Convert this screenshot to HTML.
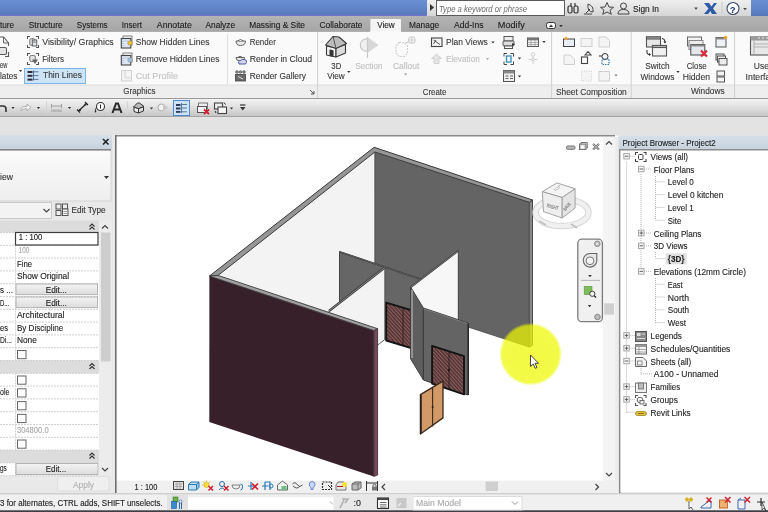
<!DOCTYPE html>
<html><head><meta charset="utf-8"><title>Revit</title>
<style>html,body{margin:0;padding:0;width:768px;height:512px;overflow:hidden;background:#e9e9e9}
svg{display:block;filter:blur(0.25px)} text{font-family:"Liberation Sans", sans-serif;}</style></head>
<body><svg width="768" height="512" viewBox="0 0 768 512">
<rect x="0" y="0" width="768" height="512" fill="#e9e9e9" />
<defs><linearGradient id="gTitle" x1="0" y1="0" x2="0" y2="1"><stop offset="0" stop-color="#6b90d4"/><stop offset="0.6" stop-color="#5f82c6"/><stop offset="1" stop-color="#5777b8"/></linearGradient><linearGradient id="gTitleR" x1="0" y1="0" x2="0" y2="1"><stop offset="0" stop-color="#efefef"/><stop offset="1" stop-color="#d6d6d6"/></linearGradient><linearGradient id="gQat" x1="0" y1="0" x2="0" y2="1"><stop offset="0" stop-color="#f2f2f2"/><stop offset="0.4" stop-color="#e4e4e4"/><stop offset="1" stop-color="#c6c6c6"/></linearGradient><linearGradient id="gTab" x1="0" y1="0" x2="0" y2="1"><stop offset="0" stop-color="#b4b4b4"/><stop offset="1" stop-color="#a6a6a6"/></linearGradient><linearGradient id="gPH" x1="0" y1="0" x2="0" y2="1"><stop offset="0" stop-color="#d6e0ea"/><stop offset="1" stop-color="#c6d3df"/></linearGradient><linearGradient id="gBtn" x1="0" y1="0" x2="0" y2="1"><stop offset="0" stop-color="#f4f4f4"/><stop offset="1" stop-color="#dcdcdc"/></linearGradient><radialGradient id="gYel"><stop offset="0" stop-color="#eef800" stop-opacity="0.74"/><stop offset="0.9" stop-color="#eef800" stop-opacity="0.72"/><stop offset="1" stop-color="#eef800" stop-opacity="0"/></radialGradient><pattern id="hatch" patternUnits="userSpaceOnUse" width="2.6" height="4" patternTransform="rotate(-42)"><rect width="2.6" height="4" fill="#4c2f2f"/><rect width="1.2" height="4" fill="#8e6060"/></pattern><linearGradient id="gSel" x1="0" y1="0" x2="0" y2="1"><stop offset="0" stop-color="#fbfbfb"/><stop offset="1" stop-color="#eeeeee"/></linearGradient></defs>
<rect x="0" y="0" width="768" height="16" fill="url(#gTitle)" />
<line x1="0" y1="15.5" x2="427" y2="15.5" stroke="#7570d4" stroke-width="1" />
<rect x="427" y="0" width="324" height="16" fill="url(#gTitleR)" />
<rect x="751" y="0" width="17" height="16" fill="url(#gTitle)" />
<polygon points="430.0,4.0 434.0,7.5 430.0,11.0" fill="#333" />
<rect x="436.5" y="0.5" width="128" height="15" fill="#ffffff" stroke="#5a5a5a" stroke-width="1" />
<text x="439" y="11.5" font-size="9" font-style="italic" fill="#6a6a6a" textLength="88" lengthAdjust="spacingAndGlyphs">Type a keyword or phrase</text>
<g fill="none" stroke="#333" stroke-width="1.2"><rect x="568" y="6" width="4" height="7" rx="1.5"/><rect x="574" y="6" width="4" height="7" rx="1.5"/><line x1="571" y1="3" x2="571" y2="6"/><line x1="575" y1="3" x2="575" y2="6"/></g>
<g fill="none" stroke="#444" stroke-width="1"><path d="M586 13 L590 9 M588 4 Q 594 6 593 12 Q 587 12 588 4 Z M584 14 L592 14"/></g>
<path d="M607 2.5 L609 7 L613.5 7.3 L610 10.2 L611.3 14.3 L607 12 L602.7 14.3 L604 10.2 L600.5 7.3 L605 7 Z" fill="none" stroke="#444" stroke-width="1"/>
<g fill="none" stroke="#444" stroke-width="1"><circle cx="623.5" cy="6" r="3"/><path d="M618 14 Q618 9.5 623.5 9.5 Q629 9.5 629 14 Z"/></g>
<text x="633.0" y="12.0" font-size="9" fill="#222" stroke="#222" stroke-width="0.12" textLength="26.0" lengthAdjust="spacingAndGlyphs">Sign In</text>
<polygon points="694.2,7.4 697.8,7.4 696.0,9.8" fill="#444" />
<path d="M704 3 L709 3 L711.5 6.5 L714 3 L717 3 L713 8.5 L717 14 L712 14 L710.5 11 L708 14 L704 14 L708.5 8.5 Z" fill="#2e5aa8"/>
<line x1="722" y1="2" x2="722" y2="14" stroke="#c8c8c8" stroke-width="1" />
<circle cx="733" cy="8.5" r="6" fill="#fff" stroke="#3a4a6a" stroke-width="1.1"/>
<text x="730.0" y="12.5" font-size="9" fill="#1e3c7a" stroke="#1e3c7a" stroke-width="0.12" font-weight="bold">?</text>
<polygon points="743.2,7.9 746.8,7.9 745.0,10.3" fill="#444" />
<rect x="0" y="16" width="768" height="15" fill="url(#gTab)" />
<rect x="370.5" y="19" width="30.5" height="12" fill="#f4f4f4" />
<line x1="370.5" y1="19" x2="370.5" y2="31" stroke="#d8d8d8" stroke-width="1" />
<text x="0.0" y="28.0" font-size="9" fill="#1e1e1e" stroke="#1e1e1e" stroke-width="0.12" textLength="14.0" lengthAdjust="spacingAndGlyphs">ture</text>
<text x="28.8" y="28.0" font-size="9" fill="#1e1e1e" stroke="#1e1e1e" stroke-width="0.12" textLength="33.8" lengthAdjust="spacingAndGlyphs">Structure</text>
<text x="76.8" y="28.0" font-size="9" fill="#1e1e1e" stroke="#1e1e1e" stroke-width="0.12" textLength="30.8" lengthAdjust="spacingAndGlyphs">Systems</text>
<text x="121.8" y="28.0" font-size="9" fill="#1e1e1e" stroke="#1e1e1e" stroke-width="0.12" textLength="20.2" lengthAdjust="spacingAndGlyphs">Insert</text>
<text x="156.8" y="28.0" font-size="9" fill="#1e1e1e" stroke="#1e1e1e" stroke-width="0.12" textLength="35.0" lengthAdjust="spacingAndGlyphs">Annotate</text>
<text x="205.5" y="28.0" font-size="9" fill="#1e1e1e" stroke="#1e1e1e" stroke-width="0.12" textLength="29.5" lengthAdjust="spacingAndGlyphs">Analyze</text>
<text x="249.2" y="28.0" font-size="9" fill="#1e1e1e" stroke="#1e1e1e" stroke-width="0.12" textLength="55.8" lengthAdjust="spacingAndGlyphs">Massing &amp; Site</text>
<text x="319.5" y="28.0" font-size="9" fill="#1e1e1e" stroke="#1e1e1e" stroke-width="0.12" textLength="43.0" lengthAdjust="spacingAndGlyphs">Collaborate</text>
<text x="377.2" y="28.0" font-size="9" fill="#1e1e1e" stroke="#1e1e1e" stroke-width="0.12" textLength="17.5" lengthAdjust="spacingAndGlyphs">View</text>
<text x="409.0" y="28.0" font-size="9" fill="#1e1e1e" stroke="#1e1e1e" stroke-width="0.12" textLength="30.2" lengthAdjust="spacingAndGlyphs">Manage</text>
<text x="454.0" y="28.0" font-size="9" fill="#1e1e1e" stroke="#1e1e1e" stroke-width="0.12" textLength="29.5" lengthAdjust="spacingAndGlyphs">Add-Ins</text>
<text x="497.8" y="28.0" font-size="9" fill="#1e1e1e" stroke="#1e1e1e" stroke-width="0.12" textLength="27.0" lengthAdjust="spacingAndGlyphs">Modify</text>
<rect x="546.5" y="22.5" width="9" height="6" fill="#f8f8f8" stroke="#333" stroke-width="1" rx="2" />
<polygon points="549.0,27.0 553.0,27.0 551.0,24.5" fill="#333" />
<polygon points="559.2,24.9 562.8,24.9 561.0,27.3" fill="#333" />
<rect x="0" y="31" width="768" height="54" fill="#fafafa" />
<line x1="0" y1="31.5" x2="370" y2="31.5" stroke="#b0b0b0" stroke-width="1" />
<line x1="401" y1="31.5" x2="768" y2="31.5" stroke="#b0b0b0" stroke-width="1" />
<rect x="0" y="85" width="768" height="13" fill="#eeeeee" />
<line x1="0" y1="85" x2="768" y2="85" stroke="#dcdcdc" stroke-width="1" />
<line x1="0" y1="98.5" x2="768" y2="98.5" stroke="#9a9a9a" stroke-width="1" />
<line x1="317.6" y1="32" x2="317.6" y2="98" stroke="#d0d0d0" stroke-width="1" />
<line x1="551.6" y1="32" x2="551.6" y2="98" stroke="#d0d0d0" stroke-width="1" />
<line x1="631.2" y1="32" x2="631.2" y2="98" stroke="#d0d0d0" stroke-width="1" />
<line x1="734.6" y1="32" x2="734.6" y2="98" stroke="#d0d0d0" stroke-width="1" />
<line x1="227.5" y1="34" x2="227.5" y2="84" stroke="#dedede" stroke-width="1" />
<path d="M310 90 L314 94 M311 94 H314 V91" fill="none" stroke="#555" stroke-width="1"/>
<rect x="24.5" y="68.5" width="61" height="15" fill="#cde4f7" stroke="#7fb4e6" stroke-width="1" />
<text x="0.0" y="68.3" font-size="9" fill="#3a3a3a" stroke="#3a3a3a" stroke-width="0.12" textLength="7.3" lengthAdjust="spacingAndGlyphs">ew</text>
<text x="0.0" y="79.2" font-size="9" fill="#3a3a3a" stroke="#3a3a3a" stroke-width="0.12" textLength="17.5" lengthAdjust="spacingAndGlyphs">lates</text>
<polygon points="18.9,70.0 22.1,70.0 20.5,72.1" fill="#333" />
<text x="42.2" y="45.3" font-size="9" fill="#3a3a3a" stroke="#3a3a3a" stroke-width="0.12" textLength="71.5" lengthAdjust="spacingAndGlyphs">Visibility/  Graphics</text>
<text x="42.2" y="62.0" font-size="9" fill="#3a3a3a" stroke="#3a3a3a" stroke-width="0.12" textLength="21.8" lengthAdjust="spacingAndGlyphs">Filters</text>
<text x="43.0" y="78.4" font-size="9" fill="#3a3a3a" stroke="#3a3a3a" stroke-width="0.12" textLength="39.0" lengthAdjust="spacingAndGlyphs">Thin  Lines</text>
<text x="135.8" y="44.8" font-size="9" fill="#3a3a3a" stroke="#3a3a3a" stroke-width="0.12" textLength="73.7" lengthAdjust="spacingAndGlyphs">Show  Hidden Lines</text>
<text x="135.8" y="62.0" font-size="9" fill="#3a3a3a" stroke="#3a3a3a" stroke-width="0.12" textLength="83.6" lengthAdjust="spacingAndGlyphs">Remove  Hidden Lines</text>
<text x="135.8" y="79.2" font-size="9" fill="#c4c4c4" stroke="#c4c4c4" stroke-width="0.12" textLength="42.2" lengthAdjust="spacingAndGlyphs">Cut  Profile</text>
<text x="249.7" y="44.8" font-size="9" fill="#3a3a3a" stroke="#3a3a3a" stroke-width="0.12" textLength="26.1" lengthAdjust="spacingAndGlyphs">Render</text>
<text x="249.7" y="62.0" font-size="9" fill="#3a3a3a" stroke="#3a3a3a" stroke-width="0.12" textLength="62.5" lengthAdjust="spacingAndGlyphs">Render  in Cloud</text>
<text x="249.7" y="79.0" font-size="9" fill="#3a3a3a" stroke="#3a3a3a" stroke-width="0.12" textLength="56.3" lengthAdjust="spacingAndGlyphs">Render  Gallery</text>
<text x="123.3" y="94.0" font-size="9" fill="#3a3a3a" stroke="#3a3a3a" stroke-width="0.12" textLength="32.3" lengthAdjust="spacingAndGlyphs">Graphics</text>
<text x="331.3" y="69.0" font-size="9" fill="#3a3a3a" stroke="#3a3a3a" stroke-width="0.12" textLength="10.0" lengthAdjust="spacingAndGlyphs">3D</text>
<text x="327.2" y="79.2" font-size="9" fill="#3a3a3a" stroke="#3a3a3a" stroke-width="0.12" textLength="17.6" lengthAdjust="spacingAndGlyphs">View</text>
<polygon points="347.2,71.0 350.4,71.0 348.8,73.1" fill="#333" />
<text x="355.4" y="69.0" font-size="9" fill="#c0c0c0" stroke="#c0c0c0" stroke-width="0.12" textLength="27.0" lengthAdjust="spacingAndGlyphs">Section</text>
<text x="392.9" y="69.0" font-size="9" fill="#c0c0c0" stroke="#c0c0c0" stroke-width="0.12" textLength="26.5" lengthAdjust="spacingAndGlyphs">Callout</text>
<polygon points="404.0,73.5 407.2,73.5 405.6,75.6" fill="#999" />
<text x="446.0" y="45.0" font-size="9" fill="#3a3a3a" stroke="#3a3a3a" stroke-width="0.12" textLength="41.8" lengthAdjust="spacingAndGlyphs">Plan  Views</text>
<polygon points="491.4,41.5 494.6,41.5 493.0,43.6" fill="#333" />
<text x="446.0" y="61.9" font-size="9" fill="#c0c0c0" stroke="#c0c0c0" stroke-width="0.12" textLength="33.8" lengthAdjust="spacingAndGlyphs">Elevation</text>
<polygon points="485.9,58.0 489.1,58.0 487.5,60.1" fill="#aaa" />
<text x="422.7" y="94.7" font-size="9" fill="#3a3a3a" stroke="#3a3a3a" stroke-width="0.12" textLength="23.7" lengthAdjust="spacingAndGlyphs">Create</text>
<text x="555.9" y="94.5" font-size="9" fill="#3a3a3a" stroke="#3a3a3a" stroke-width="0.12" textLength="70.9" lengthAdjust="spacingAndGlyphs">Sheet Composition</text>
<text x="645.3" y="68.6" font-size="9" fill="#3a3a3a" stroke="#3a3a3a" stroke-width="0.12" textLength="24.3" lengthAdjust="spacingAndGlyphs">Switch</text>
<text x="640.4" y="79.6" font-size="9" fill="#3a3a3a" stroke="#3a3a3a" stroke-width="0.12" textLength="34.1" lengthAdjust="spacingAndGlyphs">Windows</text>
<polygon points="676.4,71.0 679.6,71.0 678.0,73.1" fill="#333" />
<text x="686.7" y="68.6" font-size="9" fill="#3a3a3a" stroke="#3a3a3a" stroke-width="0.12" textLength="20.0" lengthAdjust="spacingAndGlyphs">Close</text>
<text x="682.7" y="79.6" font-size="9" fill="#3a3a3a" stroke="#3a3a3a" stroke-width="0.12" textLength="27.3" lengthAdjust="spacingAndGlyphs">Hidden</text>
<text x="690.9" y="94.2" font-size="9" fill="#3a3a3a" stroke="#3a3a3a" stroke-width="0.12" textLength="33.7" lengthAdjust="spacingAndGlyphs">Windows</text>
<text x="753.8" y="68.6" font-size="9" fill="#3a3a3a" stroke="#3a3a3a" stroke-width="0.12" textLength="18.0" lengthAdjust="spacingAndGlyphs">User</text>
<text x="745.6" y="79.6" font-size="9" fill="#3a3a3a" stroke="#3a3a3a" stroke-width="0.12" textLength="34.0" lengthAdjust="spacingAndGlyphs">Interface</text>
<g fill="none" stroke="#5a5a5a" stroke-width="1.1"><path d="M-1 37 L3.5 37 L8.5 43 L8.5 46"/><path d="M-1 47.5 L5 47.5 Q6.5 47.5 6.5 49 L6.5 53 Q6.5 54.5 5 54.5 L-1 54.5" fill="#e4e4e4"/><path d="M8.5 52 L8.5 56.5 L5 56.5"/></g>
<path d="M3.5 37 L8.5 43 L3.5 43 Z" fill="#eee" stroke="#5a5a5a" stroke-width="0.9"/>
<path d="M27.5 39.0 V36.5 H30.0 M36.0 36.5 H38.5 V39.0 M38.5 45.0 V47.5 H36.0 M30.0 47.5 H27.5 V45.0" fill="none" stroke="#555" stroke-width="1.1"/>
<rect x="29.8" y="38.8" width="5" height="6.5" rx="1" fill="#e6e6e6" stroke="#666" stroke-width="0.9"/><rect x="32.3" y="40" width="4.5" height="6" fill="#dfe6ee" stroke="#555" stroke-width="0.9"/><line x1="33.2" y1="42" x2="35.8" y2="42" stroke="#555" stroke-width="0.9"/>
<path d="M27.5 56.0 V53.5 H30.0 M36.0 53.5 H38.5 V56.0 M38.5 62.0 V64.5 H36.0 M30.0 64.5 H27.5 V62.0" fill="none" stroke="#555" stroke-width="1.1"/>
<rect x="29.8" y="55.5" width="5.5" height="6" rx="1.5" fill="#e6e6e6" stroke="#666" stroke-width="0.9"/><path d="M32 59.5 L38 59.5 L35 64 Z" fill="#666"/>
<g><rect x="27.5" y="71" width="5" height="2" fill="#2a2a3a"/><rect x="27.5" y="74.8" width="5" height="2" fill="#2a2a3a"/><rect x="27.5" y="78.6" width="5" height="2" fill="#2a2a3a"/><path d="M33.5 71.8 H38.5 M33.5 75.6 H38.5 M33.5 79.4 H38.5 M33.5 70.5 V80.5" stroke="#3a5a8a" stroke-width="0.8"/></g>
<rect x="123" y="36" width="9" height="9" fill="#f4f4f4" stroke="#777" stroke-width="0.9"/>
<rect x="121.3" y="38.5" width="9.5" height="9.5" fill="#dce6f2" stroke="#444" stroke-width="1.1"/>
<path d="M123 41 V47 M124.5 41 H128" stroke="#7aa0c8" stroke-width="0.8" stroke-dasharray="1,1"/>
<circle cx="130" cy="43" r="2.3" fill="#f0c020" stroke="#888" stroke-width="0.5"/>
<rect x="123" y="53" width="9" height="9" fill="#f4f4f4" stroke="#777" stroke-width="0.9"/>
<rect x="121.3" y="55.5" width="9.5" height="9.5" fill="#dce6f2" stroke="#444" stroke-width="1.1"/>
<path d="M123 58 V64 M124.5 58 H128" stroke="#7aa0c8" stroke-width="0.8" stroke-dasharray="1,1"/>
<circle cx="130" cy="60" r="2.3" fill="#9ac4e0" stroke="#888" stroke-width="0.5"/>
<rect x="121.5" y="70.5" width="10" height="10.5" fill="#f4f4f4" stroke="#d0d0d0" stroke-width="1"/><path d="M125 70.5 V78 H131.5" fill="none" stroke="#d4d4d4" stroke-width="1"/>
<g fill="#e8e8e8" stroke="#666" stroke-width="1"><path d="M236 41 Q236 45.5 240.5 45.5 Q245.5 45.5 245.5 41 Z"/><path d="M237.5 41 Q240.5 38 243.5 41"/></g>
<g stroke="#666" stroke-width="1"><path d="M236 57.5 Q236 61 240 61 Q244.5 61 244.5 57.5 Z" fill="#e8e8e8"/><path d="M237.5 57.5 Q240 55 242.5 57.5" fill="none"/><path d="M239 64 Q237.5 61 240.5 60.8 Q241.5 58.5 244 59.5 Q247 59.5 246.5 62.5 Q246.5 64 244.5 64 Z" fill="#d4d4f0" stroke="#4a5aa0"/></g>
<g fill="#999" stroke="#555" stroke-width="0.8"><circle cx="237" cy="72" r="1.3"/><circle cx="240.5" cy="72" r="1.3"/><circle cx="244" cy="72" r="1.3"/></g><rect x="235.5" y="74.5" width="10" height="6.5" fill="#6a6a6a" stroke="#444" stroke-width="0.8"/><path d="M238 76.5 L243 79" stroke="#ddd" stroke-width="1"/>
<g stroke="#3a3a3a" stroke-width="1.1" stroke-linejoin="round"><path d="M326.5 46 L326.5 55 L336 57 L336 48 Z" fill="#f2f2f2"/><path d="M336 48 L336 57 L345.5 53 L345.5 44.5 Z" fill="#dcdcdc"/><path d="M325.5 45 L333 36.5 L339 37 L346.5 43.5 L336 48.5 Z" fill="#bdbdbd"/><path d="M333 36.5 L336 48.5" fill="none" stroke-width="0.8"/><path d="M330 50 L333 50.7 L333 56.3 L330 55.6 Z" fill="#333"/></g>
<g fill="#f0f0f0" stroke="#c8c8c8" stroke-width="1.2"><circle cx="366.5" cy="45" r="6.2"/><path d="M367.5 37 L378.5 45 L367.5 53 Z" fill="#d8d8d8" stroke="none"/><line x1="367.5" y1="37" x2="367.5" y2="58"/></g>
<g fill="none" stroke="#cdcdcd" stroke-width="1.1"><path d="M399 42.5 H404.5 L407.5 46 V53 L404.5 56.5 H399 L396 53 V46 Z" stroke-dasharray="2,1"/><circle cx="411.8" cy="40" r="3.3"/><path d="M411.8 37 V43 M408.8 40 H414.8"/><path d="M406 43 L409 41.5"/></g>
<rect x="431.5" y="38" width="10.5" height="8.5" fill="#f4f4f4" stroke="#444" stroke-width="1.1"/><path d="M433.5 40 L440 44.5 M433.5 44 L436 40" stroke="#444" stroke-width="0.9"/>
<path d="M436.5 54 L441.5 58.5 L439 58.5 L439 63.5 L434 63.5 L434 58.5 L431.5 58.5 Z" fill="#e4e4e4" stroke="#cfcfcf" stroke-width="0.9"/>
<g stroke="#555" stroke-width="1"><rect x="504" y="36.5" width="9" height="4.5" fill="#eee"/><rect x="503" y="41" width="11" height="5" rx="1" fill="#ddd"/><rect x="504.5" y="46" width="8" height="2.5" fill="#fff"/></g><path d="M512 43 L515 44.5 L512 46" fill="#333"/>
<path d="M504 53.5 H507 M504 53.5 V56.5 M513.5 53.5 H510.5 M513.5 53.5 V56.5 M504 64.5 H507 M504 64.5 V61.5 M513.5 64.5 H510.5 M513.5 64.5 V61.5" stroke="#444" stroke-width="1"/><rect x="506.5" y="56" width="4.5" height="6" fill="none" stroke="#3a8ab8" stroke-width="1.3"/>
<polygon points="517.9,57.5 521.1,57.5 519.5,59.6" fill="#333" />
<rect x="503.5" y="70.5" width="11" height="11" fill="#f0f0f0" stroke="#555" stroke-width="1"/><rect x="503.5" y="70.5" width="11" height="3" fill="#888"/><path d="M505.5 76 H508.5 M505.5 78.5 H508.5 M510 76 H513 M510 78.5 H513" stroke="#666" stroke-width="1"/>
<polygon points="517.9,75.5 521.1,75.5 519.5,77.6" fill="#333" />
<rect x="527.5" y="38" width="11" height="8.5" fill="#f0f0f0" stroke="#555" stroke-width="1"/><rect x="527.5" y="38" width="11" height="2.3" fill="#777"/><path d="M527.5 42.5 H538.5 M527.5 44.5 H538.5 M531 40 V46.5 M535 40 V46.5" stroke="#888" stroke-width="0.6"/>
<polygon points="542.4,41.0 545.6,41.0 544.0,43.1" fill="#333" />
<g stroke="#d0d0d0" stroke-width="1" fill="none"><circle cx="533" cy="54.5" r="1.8"/><path d="M533 56.5 V64 M528.5 59.5 H531 M535 59.5 H537.5"/><circle cx="533" cy="59.5" r="1.5"/></g>
<rect x="563.5" y="39" width="11" height="7.5" fill="#e8eef4" stroke="#444" stroke-width="1"/><path d="M565 39 L566 36.5 L567 39" fill="#f09020"/><circle cx="566" cy="38.5" r="1.6" fill="#f0a030"/>
<g fill="#f4f4f4" stroke="#cfcfcf" stroke-width="1"><rect x="581" y="38.5" width="11" height="8"/><path d="M599 37 H606 L609.5 40.5 V47 H599 Z"/><path d="M564 55 H570 L574.5 59 V64.5 H564 Z"/><rect x="581.5" y="71" width="10" height="10" stroke-dasharray="1,1.5"/><rect x="599" y="71.5" width="10.5" height="9.5"/></g>
<polygon points="614.4,74.5 617.6,74.5 616.0,76.6" fill="#777" />
<g fill="none" stroke="#444" stroke-width="1.1"><rect x="581.5" y="57" width="6" height="6.5"/><path d="M585 55 L588 51.5 L591 55 Z"/></g>
<g fill="none" stroke="#333" stroke-width="1"><circle cx="605" cy="56.5" r="3"/><path d="M599 56 H602"/></g><rect x="602" y="59" width="7" height="5.5" fill="none" stroke="#3a7ac0" stroke-width="1.2" stroke-dasharray="1.5,1"/>
<g stroke="#555" stroke-width="1.1"><rect x="646.5" y="37" width="14" height="10" fill="#e6e6e6"/><rect x="646.5" y="37" width="14" height="2" fill="#bbb"/><rect x="652.5" y="45.5" width="14" height="10.5" fill="#f0f0f0"/><rect x="652.5" y="45.5" width="14" height="2" fill="#bbb"/></g><path d="M662 38.5 Q665 38.5 665 42" fill="none" stroke="#222" stroke-width="1"/><path d="M663.5 41.5 L665 43.5 L666.5 41.5" fill="#222"/><path d="M647 50 V53 Q647 54.5 649.5 54.5" fill="none" stroke="#222" stroke-width="1"/><path d="M649 53 L651 54.5 L649 56" fill="#222"/>
<g stroke="#666" stroke-width="1"><rect x="687.5" y="37" width="14" height="9" fill="#f2f2f2"/><rect x="689" y="40.5" width="14" height="9" fill="#ececec" stroke="#888"/><rect x="690.8" y="44.5" width="14" height="10.5" fill="#e4e8ee" stroke="#444"/><rect x="690.8" y="44.5" width="14" height="2" fill="#888" stroke="none"/></g><path d="M701 50.5 L707 56.5 M707 50.5 L701 56.5" stroke="#d8283a" stroke-width="2.2"/>
<rect x="716" y="37.5" width="10" height="9.5" fill="#eef2f6" stroke="#555" stroke-width="1"/><rect x="716" y="37.5" width="10" height="2" fill="#888"/><circle cx="725.5" cy="37.5" r="1.8" fill="#f0a030"/>
<g fill="#ececec" stroke="#555" stroke-width="1"><rect x="716" y="54" width="8" height="6"/><rect x="717.5" y="56" width="8" height="6"/><rect x="719" y="58.5" width="8" height="6.5"/></g>
<g fill="#f4f4f4" stroke="#555" stroke-width="1"><rect x="717" y="71" width="7.5" height="5"/><rect x="717" y="77" width="7.5" height="5"/></g>
<rect x="750.5" y="37" width="20" height="18" fill="#e8e8e8" stroke="#555" stroke-width="1.1"/><rect x="750.5" y="37" width="20" height="3.5" fill="#9a9a9a"/><path d="M754 40.5 V55 M754 44 H770 M754 47 H770" stroke="#999" stroke-width="0.7"/><path d="M758 38 H760 M762 38 H764 M766 38 H768" stroke="#eee" stroke-width="1.2"/>
<rect x="0" y="99" width="768" height="17" fill="url(#gQat)" />
<rect x="0" y="117" width="768" height="18" fill="#e3e3e3" />
<line x1="0" y1="116.5" x2="768" y2="116.5" stroke="#a4a4a4" stroke-width="1" />
<rect x="173.5" y="100.5" width="16" height="15" fill="#cfe3f6" stroke="#4d88d0" stroke-width="1" />
<path d="M-1 106 H3 Q6 106 6 109 V112" fill="none" stroke="#333" stroke-width="1.6"/>
<polygon points="11.4,107.0 14.6,107.0 13.0,109.1" fill="#333" />
<path d="M21 111 Q20.5 106.5 25 106.5 H27 V104 L31 107.5 L27 111 V108.8 H25 Q23 109 21 111 Z" fill="#f2f2f2" stroke="#b0b0b0" stroke-width="1"/>
<polygon points="36.9,107.0 40.1,107.0 38.5,109.1" fill="#333" />
<line x1="46.5" y1="101" x2="46.5" y2="115" stroke="#d4d4d4" stroke-width="1" />
<path d="M51.5 104 V108 M61.5 104 V108 M51.5 106 H61.5" stroke="#a0a0a0" stroke-width="1"/><rect x="51" y="109.5" width="11" height="2.5" fill="#b8b8b8"/>
<polygon points="67.9,107.0 71.1,107.0 69.5,109.1" fill="#333" />
<path d="M78.5 111 L86.5 103.5 M77 109.5 L80 112.5 M85 102 L88 105" stroke="#222" stroke-width="1.1"/><circle cx="80" cy="110" r="1" fill="#222"/><circle cx="85.5" cy="104.5" r="1" fill="#222"/>
<circle cx="100.5" cy="106.5" r="4" fill="#fff" stroke="#333" stroke-width="1.1"/><path d="M100.5 104.5 V108.5" stroke="#222" stroke-width="1"/><path d="M96.5 107.5 Q95 109 95.5 111.5" fill="none" stroke="#333" stroke-width="1"/><circle cx="95.5" cy="111.5" r="0.9" fill="#333"/>
<path d="M112.5 113 L116 103.5 H118 L121.5 113 M113.8 109.5 H120.2" fill="none" stroke="#2a2a2a" stroke-width="2"/>
<line x1="127.5" y1="101" x2="127.5" y2="115" stroke="#d4d4d4" stroke-width="1" />
<g stroke="#333" stroke-width="1" stroke-linejoin="round"><path d="M134 107 V111.5 L138.5 113 V108.5 Z" fill="#eee"/><path d="M138.5 108.5 V113 L143.5 111 V106.5 Z" fill="#ddd"/><path d="M133.5 107 L137.5 103 L139.5 103 L144 106.5 L138.5 108.5 Z" fill="#bbb"/></g>
<polygon points="149.9,107.5 153.1,107.5 151.5,109.6" fill="#333" />
<circle cx="161.5" cy="107.5" r="3.5" fill="#f2f2f2" stroke="#aaa" stroke-width="1"/><path d="M163 103.5 L168 107.5 L163 111.5 Z" fill="#c8c8c8"/>
<g><rect x="176" y="104" width="4.5" height="2" fill="#2a3a5a"/><rect x="176" y="107.5" width="4.5" height="2" fill="#2a3a5a"/><rect x="176" y="111" width="4.5" height="1.8" fill="#2a3a5a"/><path d="M181.5 104.5 H187 M181.5 108 H187 M181.5 111.8 H187 M181.5 103 V113" stroke="#3a5a8a" stroke-width="0.8"/></g>
<g stroke="#777" stroke-width="1"><rect x="198.5" y="103" width="9" height="5.5" fill="#eee"/><rect x="197.5" y="106.5" width="9" height="6" fill="#f4f4f4" stroke="#555"/></g><path d="M204 109.5 L209 114 M209 109.5 L204 114" stroke="#d02030" stroke-width="1.8"/>
<g stroke="#444" stroke-width="1.1"><rect x="214.5" y="103" width="8" height="6" fill="#eee"/><rect x="218" y="107" width="8.5" height="6.5" fill="#f6f6f6"/></g><path d="M224 102.5 L225.5 104.5 M215 111 L216 113" stroke="#222" stroke-width="1"/>
<polygon points="229.9,107.5 233.1,107.5 231.5,109.6" fill="#333" />
<path d="M240 105 H245.5" stroke="#333" stroke-width="1.2"/><path d="M240 107 H245.5 L242.75 110.5 Z" fill="#333"/>
<rect x="0" y="135" width="112" height="14" fill="url(#gPH)" />
<path d="M103 139 L108.5 144.5 M108.5 139 L103 144.5" stroke="#222" stroke-width="1.6"/>
<rect x="-1" y="149.5" width="112" height="51.5" fill="url(#gSel)" stroke="#d4d4d4" stroke-width="1" />
<line x1="0" y1="149.8" x2="111" y2="149.8" stroke="#6a6a6a" stroke-width="1.2" />
<text x="0.0" y="179.8" font-size="9" fill="#333" stroke="#333" stroke-width="0.12" textLength="12.9" lengthAdjust="spacingAndGlyphs">iew</text>
<polygon points="104.0,176.0 109.0,176.0 106.5,179.0" fill="#333" />
<rect x="-1" y="202.5" width="52.5" height="16" fill="#f3f3f3" stroke="#c9c9c9" stroke-width="1" />
<path d="M43.5 209 L46.5 212 L49.5 209" fill="none" stroke="#444" stroke-width="1.2"/>
<text x="71.5" y="213.1" font-size="9" fill="#333" stroke="#333" stroke-width="0.12" textLength="34.0" lengthAdjust="spacingAndGlyphs">Edit Type</text>
<rect x="0" y="220.5" width="99" height="12" fill="#dcdcdc" />
<rect x="0" y="232.5" width="99" height="128" fill="#ffffff" />
<rect x="0" y="360.5" width="99" height="12.8" fill="#dcdcdc" />
<rect x="0" y="373.3" width="99" height="76.8" fill="#ffffff" />
<rect x="0" y="450.1" width="99" height="12.8" fill="#dcdcdc" />
<rect x="0" y="462.9" width="99" height="12.8" fill="#ffffff" />
<rect x="99" y="220.5" width="13" height="255" fill="#ececec" />
<rect x="101" y="232.5" width="9.5" height="129" fill="#cdcdcd" />
<path d="M102 228.5 L105 225.5 L108 228.5" fill="none" stroke="#444" stroke-width="1.2"/>
<path d="M102 468 L105 471 L108 468" fill="none" stroke="#444" stroke-width="1.2"/>
<path d="M89.5 226.5 L92 224.0 L94.5 226.5 M89.5 229.5 L92 227.0 L94.5 229.5" fill="none" stroke="#333" stroke-width="1.1"/>
<path d="M89.5 366 L92 363.5 L94.5 366 M89.5 369 L92 366.5 L94.5 369" fill="none" stroke="#333" stroke-width="1.1"/>
<path d="M89.5 455.5 L92 453.0 L94.5 455.5 M89.5 458.5 L92 456.0 L94.5 458.5" fill="none" stroke="#333" stroke-width="1.1"/>
<line x1="0" y1="232.5" x2="99" y2="232.5" stroke="#d0d0d0" stroke-width="1" stroke-dasharray="2,1"/>
<line x1="0" y1="245.3" x2="99" y2="245.3" stroke="#d0d0d0" stroke-width="1" stroke-dasharray="2,1"/>
<line x1="0" y1="258.1" x2="99" y2="258.1" stroke="#d0d0d0" stroke-width="1" stroke-dasharray="2,1"/>
<line x1="0" y1="270.9" x2="99" y2="270.9" stroke="#d0d0d0" stroke-width="1" stroke-dasharray="2,1"/>
<line x1="0" y1="283.7" x2="99" y2="283.7" stroke="#d0d0d0" stroke-width="1" stroke-dasharray="2,1"/>
<line x1="0" y1="296.5" x2="99" y2="296.5" stroke="#d0d0d0" stroke-width="1" stroke-dasharray="2,1"/>
<line x1="0" y1="309.3" x2="99" y2="309.3" stroke="#d0d0d0" stroke-width="1" stroke-dasharray="2,1"/>
<line x1="0" y1="322.1" x2="99" y2="322.1" stroke="#d0d0d0" stroke-width="1" stroke-dasharray="2,1"/>
<line x1="0" y1="334.9" x2="99" y2="334.9" stroke="#d0d0d0" stroke-width="1" stroke-dasharray="2,1"/>
<line x1="0" y1="347.7" x2="99" y2="347.7" stroke="#d0d0d0" stroke-width="1" stroke-dasharray="2,1"/>
<line x1="0" y1="360.5" x2="99" y2="360.5" stroke="#d0d0d0" stroke-width="1" stroke-dasharray="2,1"/>
<line x1="0" y1="373.3" x2="99" y2="373.3" stroke="#d0d0d0" stroke-width="1" stroke-dasharray="2,1"/>
<line x1="0" y1="386.1" x2="99" y2="386.1" stroke="#d0d0d0" stroke-width="1" stroke-dasharray="2,1"/>
<line x1="0" y1="398.90000000000003" x2="99" y2="398.90000000000003" stroke="#d0d0d0" stroke-width="1" stroke-dasharray="2,1"/>
<line x1="0" y1="411.70000000000005" x2="99" y2="411.70000000000005" stroke="#d0d0d0" stroke-width="1" stroke-dasharray="2,1"/>
<line x1="0" y1="424.5" x2="99" y2="424.5" stroke="#d0d0d0" stroke-width="1" stroke-dasharray="2,1"/>
<line x1="0" y1="437.3" x2="99" y2="437.3" stroke="#d0d0d0" stroke-width="1" stroke-dasharray="2,1"/>
<line x1="0" y1="450.1" x2="99" y2="450.1" stroke="#d0d0d0" stroke-width="1" stroke-dasharray="2,1"/>
<line x1="0" y1="462.9" x2="99" y2="462.9" stroke="#d0d0d0" stroke-width="1" stroke-dasharray="2,1"/>
<line x1="0" y1="475.7" x2="99" y2="475.7" stroke="#d0d0d0" stroke-width="1" stroke-dasharray="2,1"/>
<line x1="15.5" y1="232.5" x2="15.5" y2="360.5" stroke="#d0d0d0" stroke-width="1" stroke-dasharray="2,1"/>
<line x1="15.5" y1="373.3" x2="15.5" y2="450.1" stroke="#d0d0d0" stroke-width="1" stroke-dasharray="2,1"/>
<line x1="15.5" y1="462.9" x2="15.5" y2="475.7" stroke="#d0d0d0" stroke-width="1" stroke-dasharray="2,1"/>
<rect x="15.5" y="232.5" width="82.5" height="12.5" fill="#ffffff" stroke="#3c3c3c" stroke-width="1.2" />
<text x="18.8" y="240.2" font-size="9" fill="#222" stroke="#222" stroke-width="0.12" textLength="23.5" lengthAdjust="spacingAndGlyphs">1 : 100</text>
<text x="18.8" y="253.1" font-size="9" fill="#a8a8a8" stroke="#a8a8a8" stroke-width="0.12" textLength="10.6" lengthAdjust="spacingAndGlyphs">100</text>
<text x="16.9" y="266.7" font-size="9" fill="#222" stroke="#222" stroke-width="0.12" textLength="15.2" lengthAdjust="spacingAndGlyphs">Fine</text>
<text x="16.9" y="279.4" font-size="9" fill="#222" stroke="#222" stroke-width="0.12" textLength="52.2" lengthAdjust="spacingAndGlyphs">Show Original</text>
<rect x="16" y="284" width="81.5" height="10.6" fill="url(#gBtn)" stroke="#b4b4b4" stroke-width="1" />
<text x="45.7" y="293.0" font-size="9" fill="#222" stroke="#222" stroke-width="0.12" textLength="21.1" lengthAdjust="spacingAndGlyphs">Edit...</text>
<rect x="16" y="297" width="81.5" height="10.6" fill="url(#gBtn)" stroke="#b4b4b4" stroke-width="1" />
<text x="45.7" y="305.9" font-size="9" fill="#222" stroke="#222" stroke-width="0.12" textLength="21.1" lengthAdjust="spacingAndGlyphs">Edit...</text>
<text x="0.0" y="293.0" font-size="9" fill="#222" stroke="#222" stroke-width="0.12" textLength="12.9" lengthAdjust="spacingAndGlyphs">s ...</text>
<text x="0.0" y="305.9" font-size="9" fill="#222" stroke="#222" stroke-width="0.12" textLength="9.4" lengthAdjust="spacingAndGlyphs">D...</text>
<text x="16.9" y="317.6" font-size="9" fill="#222" stroke="#222" stroke-width="0.12" textLength="47.5" lengthAdjust="spacingAndGlyphs">Architectural</text>
<text x="0.0" y="330.5" font-size="9" fill="#222" stroke="#222" stroke-width="0.12" textLength="8.0" lengthAdjust="spacingAndGlyphs">es</text>
<text x="16.9" y="330.5" font-size="9" fill="#222" stroke="#222" stroke-width="0.12" textLength="46.4" lengthAdjust="spacingAndGlyphs">By Discipline</text>
<text x="0.0" y="343.3" font-size="9" fill="#222" stroke="#222" stroke-width="0.12" textLength="12.0" lengthAdjust="spacingAndGlyphs">Di...</text>
<text x="16.9" y="343.3" font-size="9" fill="#222" stroke="#222" stroke-width="0.12" textLength="19.9" lengthAdjust="spacingAndGlyphs">None</text>
<rect x="17.5" y="350.5" width="8.5" height="8.2" fill="#ffffff" stroke="#666" stroke-width="1" />
<rect x="17.5" y="376" width="8.5" height="8.2" fill="#ffffff" stroke="#666" stroke-width="1" />
<rect x="17.5" y="388.8" width="8.5" height="8.2" fill="#ffffff" stroke="#666" stroke-width="1" />
<rect x="17.5" y="401.6" width="8.5" height="8.2" fill="#ffffff" stroke="#666" stroke-width="1" />
<rect x="17.5" y="414.4" width="8.5" height="8.2" fill="#ffffff" stroke="#666" stroke-width="1" />
<rect x="17.5" y="440" width="8.5" height="8.2" fill="#ffffff" stroke="#666" stroke-width="1" />
<text x="0.0" y="395.0" font-size="9" fill="#222" stroke="#222" stroke-width="0.12" textLength="9.4" lengthAdjust="spacingAndGlyphs">ole</text>
<text x="16.9" y="432.6" font-size="9" fill="#a8a8a8" stroke="#a8a8a8" stroke-width="0.12" textLength="31.8" lengthAdjust="spacingAndGlyphs">304800.0</text>
<text x="0.0" y="471.4" font-size="9" fill="#222" stroke="#222" stroke-width="0.12" textLength="6.8" lengthAdjust="spacingAndGlyphs">gs</text>
<rect x="16" y="463.5" width="82" height="11" fill="url(#gBtn)" stroke="#b4b4b4" stroke-width="1" />
<text x="45.8" y="471.8" font-size="9" fill="#222" stroke="#222" stroke-width="0.12" textLength="20.3" lengthAdjust="spacingAndGlyphs">Edit...</text>
<rect x="57.5" y="476.5" width="51.5" height="14.5" fill="#efefef" stroke="#dedede" stroke-width="1" rx="1.5" />
<text x="72.9" y="487.5" font-size="9" fill="#b0b0b0" stroke="#b0b0b0" stroke-width="0.12" textLength="21.1" lengthAdjust="spacingAndGlyphs">Apply</text>
<rect x="115" y="135" width="505" height="358" fill="#eeeeee" />
<rect x="116" y="136" width="503" height="345" fill="#ffffff" />
<line x1="116" y1="135.8" x2="615" y2="135.8" stroke="#8a8a8a" stroke-width="1.6" />
<line x1="115.8" y1="135" x2="115.8" y2="493" stroke="#707070" stroke-width="1.6" />
<rect x="603" y="137" width="12" height="344" fill="#f4f4f4" />
<rect x="615" y="137" width="4" height="344" fill="#ececec" />
<rect x="604.3" y="303.3" width="9.7" height="11.3" fill="#cfcfcf" />
<path d="M606 144.5 L609 141.5 L612 144.5" fill="none" stroke="#444" stroke-width="1.2"/>
<path d="M606 473 L609 476 L612 473" fill="none" stroke="#444" stroke-width="1.2"/>
<rect x="117" y="480.6" width="503" height="12.4" fill="#f0f0f0" />
<text x="134.6" y="489.7" font-size="9" fill="#222" stroke="#222" stroke-width="0.12" textLength="22.8" lengthAdjust="spacingAndGlyphs">1 : 100</text>
<rect x="485.6" y="481.5" width="12.4" height="9.5" fill="#cfcfcf" />
<path d="M385 484 L382 487 L385 490" fill="none" stroke="#444" stroke-width="1.2"/>
<path d="M595.5 484 L598.5 487 L595.5 490" fill="none" stroke="#444" stroke-width="1.2"/>
<line x1="619.8" y1="136" x2="619.8" y2="493" stroke="#8c8c8c" stroke-width="1.8" />
<rect x="619" y="135.5" width="149" height="13.5" fill="url(#gPH)" />
<rect x="620.5" y="150" width="148" height="342" fill="#ffffff" />
<line x1="619" y1="149.8" x2="768" y2="149.8" stroke="#8c8c8c" stroke-width="1.6" />
<text x="622.5" y="145.6" font-size="9" fill="#1e1e1e" stroke="#1e1e1e" stroke-width="0.12" textLength="93.1" lengthAdjust="spacingAndGlyphs">Project Browser - Project2</text>
<line x1="626.5" y1="161.5" x2="626.5" y2="413" stroke="#b4b4b4" stroke-width="1" stroke-dasharray="1,1"/>
<line x1="641" y1="174" x2="641" y2="272" stroke="#b4b4b4" stroke-width="1" stroke-dasharray="1,1"/>
<line x1="655.5" y1="176" x2="655.5" y2="220" stroke="#b4b4b4" stroke-width="1" stroke-dasharray="1,1"/>
<line x1="655.5" y1="252" x2="655.5" y2="258" stroke="#b4b4b4" stroke-width="1" stroke-dasharray="1,1"/>
<line x1="655.5" y1="278" x2="655.5" y2="323" stroke="#b4b4b4" stroke-width="1" stroke-dasharray="1,1"/>
<line x1="641" y1="368" x2="641" y2="374.5" stroke="#b4b4b4" stroke-width="1" stroke-dasharray="1,1"/>
<rect x="665.6" y="253.4" width="21" height="11" fill="#e0e0e0" />
<text x="650.6" y="159.7" font-size="9" fill="#222" stroke="#222" stroke-width="0.12" textLength="37.4" lengthAdjust="spacingAndGlyphs">Views (all)</text>
<line x1="629.7" y1="156.2" x2="635" y2="156.2" stroke="#b4b4b4" stroke-width="1" stroke-dasharray="1,1"/>
<rect x="623.8" y="153.45" width="5.5" height="5.5" fill="#f6f6f6" stroke="#a8a8a8" stroke-width="1" />
<line x1="624.8" y1="156.2" x2="628.3" y2="156.2" stroke="#555" stroke-width="0.9" />
<text x="653.8" y="172.5" font-size="9" fill="#222" stroke="#222" stroke-width="0.12" textLength="40.6" lengthAdjust="spacingAndGlyphs">Floor Plans</text>
<line x1="644" y1="169.0" x2="652" y2="169.0" stroke="#b4b4b4" stroke-width="1" stroke-dasharray="1,1"/>
<rect x="638.5" y="166.25" width="5.5" height="5.5" fill="#f6f6f6" stroke="#a8a8a8" stroke-width="1" />
<line x1="639.5" y1="169.0" x2="643" y2="169.0" stroke="#555" stroke-width="0.9" />
<text x="667.8" y="185.3" font-size="9" fill="#222" stroke="#222" stroke-width="0.12" textLength="25.9" lengthAdjust="spacingAndGlyphs">Level 0</text>
<line x1="655.5" y1="181.79999999999998" x2="665" y2="181.79999999999998" stroke="#b4b4b4" stroke-width="1" stroke-dasharray="1,1"/>
<text x="667.8" y="198.1" font-size="9" fill="#222" stroke="#222" stroke-width="0.12" textLength="55.6" lengthAdjust="spacingAndGlyphs">Level 0 kitchen</text>
<line x1="655.5" y1="194.6" x2="665" y2="194.6" stroke="#b4b4b4" stroke-width="1" stroke-dasharray="1,1"/>
<text x="667.8" y="210.9" font-size="9" fill="#222" stroke="#222" stroke-width="0.12" textLength="25.9" lengthAdjust="spacingAndGlyphs">Level 1</text>
<line x1="655.5" y1="207.39999999999998" x2="665" y2="207.39999999999998" stroke="#b4b4b4" stroke-width="1" stroke-dasharray="1,1"/>
<text x="667.8" y="223.7" font-size="9" fill="#222" stroke="#222" stroke-width="0.12" textLength="13.5" lengthAdjust="spacingAndGlyphs">Site</text>
<line x1="655.5" y1="220.2" x2="665" y2="220.2" stroke="#b4b4b4" stroke-width="1" stroke-dasharray="1,1"/>
<text x="653.8" y="236.5" font-size="9" fill="#222" stroke="#222" stroke-width="0.12" textLength="47.5" lengthAdjust="spacingAndGlyphs">Ceiling Plans</text>
<line x1="644" y1="233.0" x2="652" y2="233.0" stroke="#b4b4b4" stroke-width="1" stroke-dasharray="1,1"/>
<rect x="638.5" y="230.25" width="5.5" height="5.5" fill="#f6f6f6" stroke="#a8a8a8" stroke-width="1" />
<line x1="639.5" y1="233.0" x2="643" y2="233.0" stroke="#555" stroke-width="0.9" />
<line x1="641.25" y1="231.25" x2="641.25" y2="234.75" stroke="#555" stroke-width="0.9" />
<text x="653.8" y="249.3" font-size="9" fill="#222" stroke="#222" stroke-width="0.12" textLength="33.8" lengthAdjust="spacingAndGlyphs">3D Views</text>
<line x1="644" y1="245.8" x2="652" y2="245.8" stroke="#b4b4b4" stroke-width="1" stroke-dasharray="1,1"/>
<rect x="638.5" y="243.05" width="5.5" height="5.5" fill="#f6f6f6" stroke="#a8a8a8" stroke-width="1" />
<line x1="639.5" y1="245.8" x2="643" y2="245.8" stroke="#555" stroke-width="0.9" />
<text x="667.8" y="262.1" font-size="9" fill="#222" stroke="#222" stroke-width="0.12" font-weight="bold" textLength="16.6" lengthAdjust="spacingAndGlyphs">{3D}</text>
<line x1="655.5" y1="258.6" x2="665" y2="258.6" stroke="#b4b4b4" stroke-width="1" stroke-dasharray="1,1"/>
<text x="653.8" y="274.9" font-size="9" fill="#222" stroke="#222" stroke-width="0.12" textLength="92.1" lengthAdjust="spacingAndGlyphs">Elevations (12mm Circle)</text>
<line x1="644" y1="271.4" x2="652" y2="271.4" stroke="#b4b4b4" stroke-width="1" stroke-dasharray="1,1"/>
<rect x="638.5" y="268.65" width="5.5" height="5.5" fill="#f6f6f6" stroke="#a8a8a8" stroke-width="1" />
<line x1="639.5" y1="271.4" x2="643" y2="271.4" stroke="#555" stroke-width="0.9" />
<text x="667.8" y="287.7" font-size="9" fill="#222" stroke="#222" stroke-width="0.12" textLength="14.7" lengthAdjust="spacingAndGlyphs">East</text>
<line x1="655.5" y1="284.2" x2="665" y2="284.2" stroke="#b4b4b4" stroke-width="1" stroke-dasharray="1,1"/>
<text x="667.8" y="300.5" font-size="9" fill="#222" stroke="#222" stroke-width="0.12" textLength="21.2" lengthAdjust="spacingAndGlyphs">North</text>
<line x1="655.5" y1="297.0" x2="665" y2="297.0" stroke="#b4b4b4" stroke-width="1" stroke-dasharray="1,1"/>
<text x="667.8" y="313.3" font-size="9" fill="#222" stroke="#222" stroke-width="0.12" textLength="21.2" lengthAdjust="spacingAndGlyphs">South</text>
<line x1="655.5" y1="309.8" x2="665" y2="309.8" stroke="#b4b4b4" stroke-width="1" stroke-dasharray="1,1"/>
<text x="667.8" y="326.1" font-size="9" fill="#222" stroke="#222" stroke-width="0.12" textLength="18.2" lengthAdjust="spacingAndGlyphs">West</text>
<line x1="655.5" y1="322.6" x2="665" y2="322.6" stroke="#b4b4b4" stroke-width="1" stroke-dasharray="1,1"/>
<text x="650.6" y="338.9" font-size="9" fill="#222" stroke="#222" stroke-width="0.12" textLength="31.3" lengthAdjust="spacingAndGlyphs">Legends</text>
<line x1="629.7" y1="335.4" x2="635" y2="335.4" stroke="#b4b4b4" stroke-width="1" stroke-dasharray="1,1"/>
<rect x="623.8" y="332.65" width="5.5" height="5.5" fill="#f6f6f6" stroke="#a8a8a8" stroke-width="1" />
<line x1="624.8" y1="335.4" x2="628.3" y2="335.4" stroke="#555" stroke-width="0.9" />
<line x1="626.55" y1="333.65" x2="626.55" y2="337.15" stroke="#555" stroke-width="0.9" />
<text x="650.6" y="351.7" font-size="9" fill="#222" stroke="#222" stroke-width="0.12" textLength="79.7" lengthAdjust="spacingAndGlyphs">Schedules/Quantities</text>
<line x1="629.7" y1="348.2" x2="635" y2="348.2" stroke="#b4b4b4" stroke-width="1" stroke-dasharray="1,1"/>
<rect x="623.8" y="345.45" width="5.5" height="5.5" fill="#f6f6f6" stroke="#a8a8a8" stroke-width="1" />
<line x1="624.8" y1="348.2" x2="628.3" y2="348.2" stroke="#555" stroke-width="0.9" />
<line x1="626.55" y1="346.45" x2="626.55" y2="349.95" stroke="#555" stroke-width="0.9" />
<text x="650.6" y="364.5" font-size="9" fill="#222" stroke="#222" stroke-width="0.12" textLength="40.6" lengthAdjust="spacingAndGlyphs">Sheets (all)</text>
<line x1="629.7" y1="361.0" x2="635" y2="361.0" stroke="#b4b4b4" stroke-width="1" stroke-dasharray="1,1"/>
<rect x="623.8" y="358.25" width="5.5" height="5.5" fill="#f6f6f6" stroke="#a8a8a8" stroke-width="1" />
<line x1="624.8" y1="361.0" x2="628.3" y2="361.0" stroke="#555" stroke-width="0.9" />
<text x="653.8" y="377.3" font-size="9" fill="#222" stroke="#222" stroke-width="0.12" textLength="64.6" lengthAdjust="spacingAndGlyphs">A100 - Unnamed</text>
<line x1="641" y1="373.8" x2="652" y2="373.8" stroke="#b4b4b4" stroke-width="1" stroke-dasharray="1,1"/>
<text x="650.6" y="390.1" font-size="9" fill="#222" stroke="#222" stroke-width="0.12" textLength="29.7" lengthAdjust="spacingAndGlyphs">Families</text>
<line x1="629.7" y1="386.6" x2="635" y2="386.6" stroke="#b4b4b4" stroke-width="1" stroke-dasharray="1,1"/>
<rect x="623.8" y="383.85" width="5.5" height="5.5" fill="#f6f6f6" stroke="#a8a8a8" stroke-width="1" />
<line x1="624.8" y1="386.6" x2="628.3" y2="386.6" stroke="#555" stroke-width="0.9" />
<line x1="626.55" y1="384.85" x2="626.55" y2="388.35" stroke="#555" stroke-width="0.9" />
<text x="650.6" y="402.9" font-size="9" fill="#222" stroke="#222" stroke-width="0.12" textLength="27.2" lengthAdjust="spacingAndGlyphs">Groups</text>
<line x1="629.7" y1="399.4" x2="635" y2="399.4" stroke="#b4b4b4" stroke-width="1" stroke-dasharray="1,1"/>
<rect x="623.8" y="396.65" width="5.5" height="5.5" fill="#f6f6f6" stroke="#a8a8a8" stroke-width="1" />
<line x1="624.8" y1="399.4" x2="628.3" y2="399.4" stroke="#555" stroke-width="0.9" />
<line x1="626.55" y1="397.65" x2="626.55" y2="401.15" stroke="#555" stroke-width="0.9" />
<text x="650.6" y="415.7" font-size="9" fill="#222" stroke="#222" stroke-width="0.12" textLength="40.0" lengthAdjust="spacingAndGlyphs">Revit Links</text>
<line x1="626.5" y1="412.2" x2="635" y2="412.2" stroke="#b4b4b4" stroke-width="1" stroke-dasharray="1,1"/>
<rect x="0" y="493.5" width="768" height="17" fill="#f0f0f0" />
<line x1="0" y1="493.8" x2="768" y2="493.8" stroke="#c4c4c4" stroke-width="1" />
<rect x="0" y="510.3" width="768" height="2" fill="#3e3e48" />
<text x="0.0" y="505.8" font-size="9" fill="#222" stroke="#222" stroke-width="0.12" textLength="162.7" lengthAdjust="spacingAndGlyphs">3 for alternates, CTRL adds, SHIFT unselects.</text>
<rect x="167" y="494.5" width="21" height="15.5" fill="#e2e2e2" />
<rect x="188" y="497.3" width="282" height="12" fill="#ffffff" />
<path d="M460 501.5 L463 504.5 L466 501.5" fill="none" stroke="#999" stroke-width="1"/>
<rect x="413" y="496.5" width="109" height="13.5" fill="#ffffff" stroke="#dcdcdc" stroke-width="1" />
<text x="416.0" y="506.3" font-size="9" fill="#a8a8a8" stroke="#a8a8a8" stroke-width="0.12" textLength="45.0" lengthAdjust="spacingAndGlyphs">Main Model</text>
<path d="M512 501.5 L515 504.5 L518 501.5" fill="none" stroke="#999" stroke-width="1"/>
<text x="352.0" y="506.0" font-size="9" fill="#222" stroke="#222" stroke-width="0.12" textLength="8.0" lengthAdjust="spacingAndGlyphs">:0</text>
<polygon points="218.8,276.0 374.9,152.0 374.9,296.0 218.8,423.0" fill="#f3f3f3" />
<polygon points="374.9,152.0 529.3,202.3 529.3,347.0 374.9,296.7" fill="#646464" />
<line x1="374.9" y1="152" x2="374.9" y2="296.7" stroke="#505050" stroke-width="1" />
<polygon points="529.3,202.3 532.5,200.0 532.5,345.3 529.3,347.0" fill="#8a8a8a" stroke="#3a3a3a" stroke-width="0.9" stroke-linejoin="round" />
<line x1="374.9" y1="296.7" x2="529.3" y2="347" stroke="#4a4a4a" stroke-width="0.8" />
<polygon points="209.4,276.1 374.1,147.3 532.5,200.0 529.3,202.3 374.9,152.0 218.1,275.4" fill="#969696" stroke="#3a3a3a" stroke-width="1" stroke-linejoin="round" />
<polygon points="339.5,251.7 458.0,291.7 458.0,363.7 339.5,323.7" fill="#666666" stroke="#3a3a3a" stroke-width="0.9" stroke-linejoin="round" />
<polygon points="386.2,302.6 412.0,310.4 412.0,348.4 386.2,340.5" fill="url(#hatch)" stroke="#141414" stroke-width="1.9" stroke-linejoin="round" />
<line x1="403" y1="307.8" x2="403" y2="345.8" stroke="#2a1818" stroke-width="0.8" />
<line x1="339.5" y1="251.7" x2="420" y2="279" stroke="#3a3a3a" stroke-width="1.6" />
<line x1="339.5" y1="251.7" x2="420" y2="279" stroke="#7a7a7a" stroke-width="0.5" />
<polygon points="329.0,311.0 384.8,267.5 384.8,339.5 329.0,383.0" fill="#f3f3f3" stroke="#444" stroke-width="0.8" stroke-linejoin="round" />
<line x1="329" y1="311" x2="384.8" y2="267.5" stroke="#3c3c3c" stroke-width="2.3" />
<line x1="329" y1="311" x2="384.8" y2="267.5" stroke="#9a9a9a" stroke-width="0.8" />
<polygon points="411.0,287.0 458.3,250.7 458.3,322.7 411.0,359.0" fill="#f7f7f7" stroke="#3a3a3a" stroke-width="0.9" stroke-linejoin="round" />
<line x1="411" y1="287" x2="458.3" y2="250.7" stroke="#3c3c3c" stroke-width="1.8" />
<line x1="411" y1="287" x2="458.3" y2="250.7" stroke="#9a9a9a" stroke-width="0.6" />
<polygon points="410.7,287.0 423.4,308.0 423.4,380.0 410.7,359.0" fill="#5e5e5e" stroke="#3a3a3a" stroke-width="0.9" stroke-linejoin="round" />
<polygon points="423.4,308.0 468.0,323.0 468.0,395.0 423.4,380.0" fill="#646464" stroke="#3a3a3a" stroke-width="1" stroke-linejoin="round" />
<line x1="423.4" y1="308.6" x2="468" y2="323.6" stroke="#909090" stroke-width="0.6" />
<line x1="412" y1="290" x2="412" y2="358" stroke="#e8e8e8" stroke-width="0.8" />
<polygon points="432.1,345.9 464.0,356.2 464.0,394.4 432.1,383.7" fill="url(#hatch)" stroke="#141414" stroke-width="1.9" stroke-linejoin="round" />
<line x1="449" y1="351.3" x2="449" y2="389.5" stroke="#2a1818" stroke-width="0.8" />
<circle cx="449" cy="370" r="1" fill="#111"/>
<line x1="468.3" y1="323" x2="468.3" y2="395" stroke="#2a2a2a" stroke-width="1.4" />
<polygon points="420.4,394.6 443.0,381.1 443.0,417.9 420.4,434.0" fill="#d39a68" stroke="#3a2a20" stroke-width="1.3" stroke-linejoin="round" />
<line x1="421" y1="395" x2="421" y2="433.5" stroke="#2a2020" stroke-width="1.6" />
<line x1="432.6" y1="387.8" x2="432.6" y2="426.5" stroke="#3a2a20" stroke-width="1.1" />
<circle cx="432.6" cy="407" r="1" fill="#222"/>
<polygon points="209.4,276.1 373.8,330.5 373.8,476.5 209.3,422.1" fill="#37202a" />
<polygon points="373.8,330.5 377.6,328.7 377.6,475.0 373.8,476.5" fill="#74495a" stroke="#2a1a20" stroke-width="0.7" stroke-linejoin="round" />
<polygon points="209.4,276.1 218.1,275.4 377.6,328.7 373.8,330.5" fill="#a0a0a0" stroke="#3a3a3a" stroke-width="0.9" stroke-linejoin="round" />
<circle cx="530.6" cy="354.2" r="31.5" fill="url(#gYel)"/>
<path d="M530.5 355 L530.5 366.5 L533.2 364 L535.3 368.3 L537 367.5 L535 363.3 L538.5 363.3 Z" fill="#fff" stroke="#333" stroke-width="0.9"/>
<rect x="566.5" y="146" width="8.5" height="3.3" rx="1.2" fill="#bbb" stroke="#666" stroke-width="0.9"/>
<rect x="579.5" y="144" width="6.5" height="5.6" fill="#ccc" stroke="#666" stroke-width="0.9"/><path d="M581 144 V142.5 H587.3 V148 H586" fill="none" stroke="#666" stroke-width="0.9"/><rect x="581.2" y="145.5" width="3" height="3" fill="#fff"/>
<path d="M593 144 L599 149.5 M599 144 L593 149.5" stroke="#666" stroke-width="2.2"/><path d="M593 144 L599 149.5 M599 144 L593 149.5" stroke="#ccc" stroke-width="0.9"/>
<ellipse cx="562" cy="212.5" rx="26.5" ry="13.5" fill="none" stroke="#d6d6d6" stroke-width="6.5"/>
<ellipse cx="562" cy="212.5" rx="26.5" ry="13.5" fill="none" stroke="#f0f0f0" stroke-width="4.5"/>
<path d="M571 224 L577 228 M539 221 L546 225" stroke="#c0c0c0" stroke-width="1.6"/>
<g stroke="#9a9a9a" stroke-width="0.9" stroke-linejoin="round"><path d="M542.3 191.7 L557 182.9 L575.1 188.8 L562.2 197.5 Z" fill="#f4f4f4"/><path d="M542.3 191.7 L562.2 197.5 L562.2 218 L543.5 211.6 Z" fill="#eeeeee"/><path d="M562.2 197.5 L575.1 188.8 L575.1 208.1 L562.2 218 Z" fill="#e4e4e4"/></g>
<text x="546.5" y="207" font-size="5" fill="#888" stroke="#888" stroke-width="0.2" transform="rotate(14 546.5 207)" textLength="12" lengthAdjust="spacingAndGlyphs">RIGHT</text>
<text x="565.5" y="211" font-size="4.5" fill="#888" stroke="#888" stroke-width="0.2" transform="rotate(-52 565.5 211)" textLength="9" lengthAdjust="spacingAndGlyphs">BACK</text>
<text x="555" y="192" font-size="4" fill="#999" transform="rotate(-40 555 192)">TOP</text>
<rect x="577.8" y="239.2" width="24.6" height="82.5" rx="4" fill="#f0f0f0" stroke="#7c7c7c" stroke-width="1.3"/>
<circle cx="597.3" cy="243.8" r="2.8" fill="#bbb" stroke="#777" stroke-width="0.8"/><path d="M596 242.5 L598.6 245.1 M598.6 242.5 L596 245.1" stroke="#fff" stroke-width="0.7"/>
<path d="M590 253.5 H596.8 V261 A6.8 6.8 0 1 1 590 253.5 Z" fill="#e8e8e8" stroke="#666" stroke-width="1.1"/><circle cx="590" cy="260.8" r="3.9" fill="#f2f2f2" stroke="#777" stroke-width="1"/>
<polygon points="588.2,274.9 591.8,274.9 590.0,277.3" fill="#333" />
<line x1="581" y1="280.4" x2="600" y2="280.4" stroke="#b4b4b4" stroke-width="1" />
<rect x="584.2" y="286.3" width="7.8" height="8.3" fill="#7cbc5c" stroke="#5a9a40" stroke-width="0.6"/><circle cx="592.3" cy="293.8" r="2.6" fill="#f4f4f4" stroke="#444" stroke-width="1"/><path d="M594.2 295.7 L596 297.5" stroke="#222" stroke-width="1.3"/>
<polygon points="587.8,304.9 591.4,304.9 589.6,307.3" fill="#333" />
<circle cx="597.5" cy="317" r="2.8" fill="#bbb" stroke="#777" stroke-width="0.8"/>
<rect x="173.5" y="481.5" width="10" height="8" fill="#ddd" stroke="#444" stroke-width="1"/><path d="M175 484 H182 M175 486.5 H182 M177 482.5 V489 M180 482.5 V489" stroke="#999" stroke-width="0.7"/>
<g stroke="#2a7ab8" stroke-width="1" fill="#bfe0f4"><path d="M188.5 484.5 L191 482 H199 L196.5 484.5 Z"/><path d="M188.5 484.5 H196.5 V490 H188.5 Z"/><path d="M196.5 484.5 L199 482 V487.5 L196.5 490 Z" fill="#8cc6ea"/></g>
<circle cx="206.5" cy="485" r="2.5" fill="#f8e040" stroke="#c8a000" stroke-width="0.6"/><path d="M203 481.5 L204.5 483 M206.5 480.5 V482 M210 481.5 L208.5 483 M202 485 H203.5" stroke="#d8b000" stroke-width="0.8"/><path d="M208.5 486 L213 490.5 M213 486 L208.5 490.5" stroke="#d02030" stroke-width="1.5"/>
<circle cx="222" cy="484" r="2.5" fill="none" stroke="#2a6aa8" stroke-width="1"/><path d="M219 490 Q222 486 225 490" fill="none" stroke="#2a6aa8" stroke-width="1"/><path d="M224 486 L228.5 490.5 M228.5 486 L224 490.5" stroke="#d02030" stroke-width="1.5"/>
<path d="M232 485 Q232 489 236 489 Q240 489 240 485 Z" fill="#eee" stroke="#777" stroke-width="0.9"/><path d="M240.5 484 Q243 484 242.5 487 Q242.5 490 240.5 490" fill="none" stroke="#2a7ab8" stroke-width="1"/>
<path d="M248 486 H256 M251 482 V490" stroke="#2a7ab8" stroke-width="1.2"/><path d="M252 483.5 L258 489.5 M258 483.5 L252 489.5" stroke="#d02030" stroke-width="1.6"/>
<path d="M262 486 H268 M265 482 V490 M265 482 H270 V490" fill="none" stroke="#2a7ab8" stroke-width="1.2"/><circle cx="271" cy="486" r="2" fill="none" stroke="#2a7ab8" stroke-width="1"/>
<path d="M277.5 485 L282.5 481 L287.5 485 V490 H277.5 Z" fill="#f0f0f0" stroke="#666" stroke-width="1"/><rect x="281.5" y="486" width="5" height="4" fill="#6ac080"/>
<path d="M292.5 484 Q295 481 297.5 485 Q299.5 488 302.5 485 M293 486 Q297 490 300 486" fill="none" stroke="#555" stroke-width="1"/>
<path d="M312 481.5 Q315 481.5 315 484.5 Q315 486.5 313 487.5 V489.5 H311 V487.5 Q309.3 486.5 309.3 484.5 Q309.3 481.5 312 481.5 Z" fill="#c8d8f8" stroke="#4a6ac8" stroke-width="0.8"/>
<rect x="322.5" y="482" width="9" height="7.5" fill="none" stroke="#333" stroke-width="1.2" stroke-dasharray="2,1"/><path d="M328 485 L331 488" stroke="#333" stroke-width="1"/>
<path d="M336 490 V485 L338 482 H344 L346 485 V490 Z" fill="#e8e8e8" stroke="#777" stroke-width="1"/><circle cx="344.5" cy="484.5" r="2.6" fill="#f8e040"/><path d="M337 486.5 H343" stroke="#a02020" stroke-width="1"/>
<path d="M352 484 L355 482 H361 V488 L358 490 H352 Z" fill="#bbb" stroke="#666" stroke-width="1"/><path d="M352 484 H358 V490 M358 484 L361 482" fill="none" stroke="#666" stroke-width="0.9"/>
<path d="M366.5 481 V491 M377.5 481 V491 M366.5 483 H377.5" stroke="#333" stroke-width="1"/><rect x="372" y="486.5" width="5" height="4" fill="#777"/><path d="M373 486.5 V485 Q374.5 483.5 376 485 V486.5" fill="none" stroke="#555" stroke-width="0.9"/>
<rect x="173" y="497" width="5" height="5" fill="#6ab04a" stroke="#3a7a2a" stroke-width="0.6"/><rect x="171.5" y="501.5" width="5" height="7" fill="#3a8ad0" stroke="#1a5aa0" stroke-width="0.6"/><path d="M179.5 502 V509 M181.5 502 V509" stroke="#2a6ab0" stroke-width="1"/><circle cx="180.5" cy="501.5" r="1.5" fill="#eee" stroke="#2a6ab0" stroke-width="0.7"/>
<path d="M330 501.5 L333 504.5" stroke="#aaa" stroke-width="0.9"/>
<rect x="333.5" y="494.5" width="79.5" height="15.5" fill="#e8e8e8" />
<path d="M340 508 L344 500 M342 499 H348 L345 503" fill="none" stroke="#b0b0b0" stroke-width="1.6"/>
<text x="353.6" y="506.4" font-size="9" fill="#222" stroke="#222" stroke-width="0.12" textLength="7.4" lengthAdjust="spacingAndGlyphs">:0</text>
<rect x="377.5" y="498" width="11" height="10.5" fill="#f8f8f8" stroke="#333" stroke-width="1.1"/><rect x="377.5" y="498" width="11" height="2" fill="#444"/><path d="M380 502.5 H386.5 M380 504.8 H386.5 M380 507 H386.5" stroke="#444" stroke-width="0.8"/>
<rect x="396.5" y="498" width="10" height="10" fill="#c8c8c8"/><path d="M398 506 L401 503" stroke="#eee" stroke-width="1.2"/>
<path d="M685 499.5 H693 M687 497.5 V501.5 M691 497.5 V501.5" stroke="#d8b020" stroke-width="2"/><path d="M689 501 V509 L691 507 L693 510" fill="#fff" stroke="#333" stroke-width="0.8"/>
<path d="M701 507 L709 501 H711 V508 H701 Z" fill="none" stroke="#3a6ab0" stroke-width="1"/><path d="M706.5 497.5 L711.5 502.5 M711.5 497.5 L706.5 502.5" stroke="#d02030" stroke-width="1.5"/>
<rect x="719.5" y="500" width="8" height="8" fill="#f0b070" stroke="#c06020" stroke-width="0.9"/><path d="M725 497 L730.5 502.5 M730.5 497 L725 502.5" stroke="#d02030" stroke-width="1.5"/>
<path d="M738 500 H745 V509 H738 Z M738 500 L741 498" fill="none" stroke="#3a6ab0" stroke-width="1"/><path d="M744.5 497 L750 502.5 M750 497 L744.5 502.5" stroke="#d02030" stroke-width="1.5"/>
<path d="M757 502 H765 M761 498 V506" stroke="#333" stroke-width="1.2"/><path d="M762 502 V510 L764 508 L766 511 Z" fill="#fff" stroke="#333" stroke-width="0.8"/>
<rect x="56" y="204" width="5" height="5" fill="#eee" stroke="#555" stroke-width="1"/><rect x="56" y="210.5" width="5" height="5" fill="#eee" stroke="#555" stroke-width="1"/><rect x="62.5" y="204" width="5" height="5" fill="#eee" stroke="#555" stroke-width="1"/><rect x="62.5" y="209" width="5.5" height="6.5" fill="#f4f4f4" stroke="#555" stroke-width="1"/><path d="M63.5 211.5 H67 M63.5 213.5 H67" stroke="#777" stroke-width="0.7"/>
<path d="M635.5 155.0 V152.5 H638.0 M643.5 152.5 H646 V155.0 M646 159.0 V161.5 H643.5 M638.0 161.5 H635.5 V159.0" fill="none" stroke="#444" stroke-width="1.1"/>
<rect x="638.5" y="154.5" width="4.5" height="5" rx="1" fill="none" stroke="#444" stroke-width="1"/>
<rect x="635.5" y="331.5" width="11" height="10" fill="#888" stroke="#555" stroke-width="1"/><rect x="637" y="333" width="3.5" height="3" fill="#ddd"/><path d="M641.5 334 H645 M637 338.5 H645" stroke="#ddd" stroke-width="1"/>
<rect x="635.5" y="344.5" width="11" height="9.5" fill="#f2f2f2" stroke="#666" stroke-width="1"/><rect x="635.5" y="344.5" width="11" height="2.5" fill="#999"/><path d="M635.5 349.5 H646.5 M635.5 352 H646.5 M639 347 V354" stroke="#888" stroke-width="0.7"/>
<path d="M635.5 357.5 H643 L646.5 361 V366.5 H635.5 Z" fill="#f2f2f2" stroke="#666" stroke-width="1"/><rect x="637.5" y="361" width="4.5" height="4" fill="none" stroke="#777" stroke-width="0.8"/>
<rect x="635.5" y="383" width="11" height="9.5" fill="#f0f0f0" stroke="#777" stroke-width="1"/><rect x="638.5" y="383" width="5" height="6" fill="#bbb" stroke="#666" stroke-width="0.8"/>
<path d="M635.5 398.0 V395.5 H638.0 M643.5 395.5 H646 V398.0 M646 403.0 V405.5 H643.5 M638.0 405.5 H635.5 V403.0" fill="none" stroke="#555" stroke-width="1.1"/>
<circle cx="640" cy="400" r="2.8" fill="none" stroke="#666" stroke-width="1"/><rect x="640" y="400.5" width="4" height="3.5" fill="#eee" stroke="#666" stroke-width="0.9"/>
<rect x="635.5" y="411.5" width="11" height="4" rx="2" fill="#e0c040" stroke="#a08020" stroke-width="0.8"/><path d="M638 413.5 H644" stroke="#806010" stroke-width="0.8"/>
</svg></body></html>
